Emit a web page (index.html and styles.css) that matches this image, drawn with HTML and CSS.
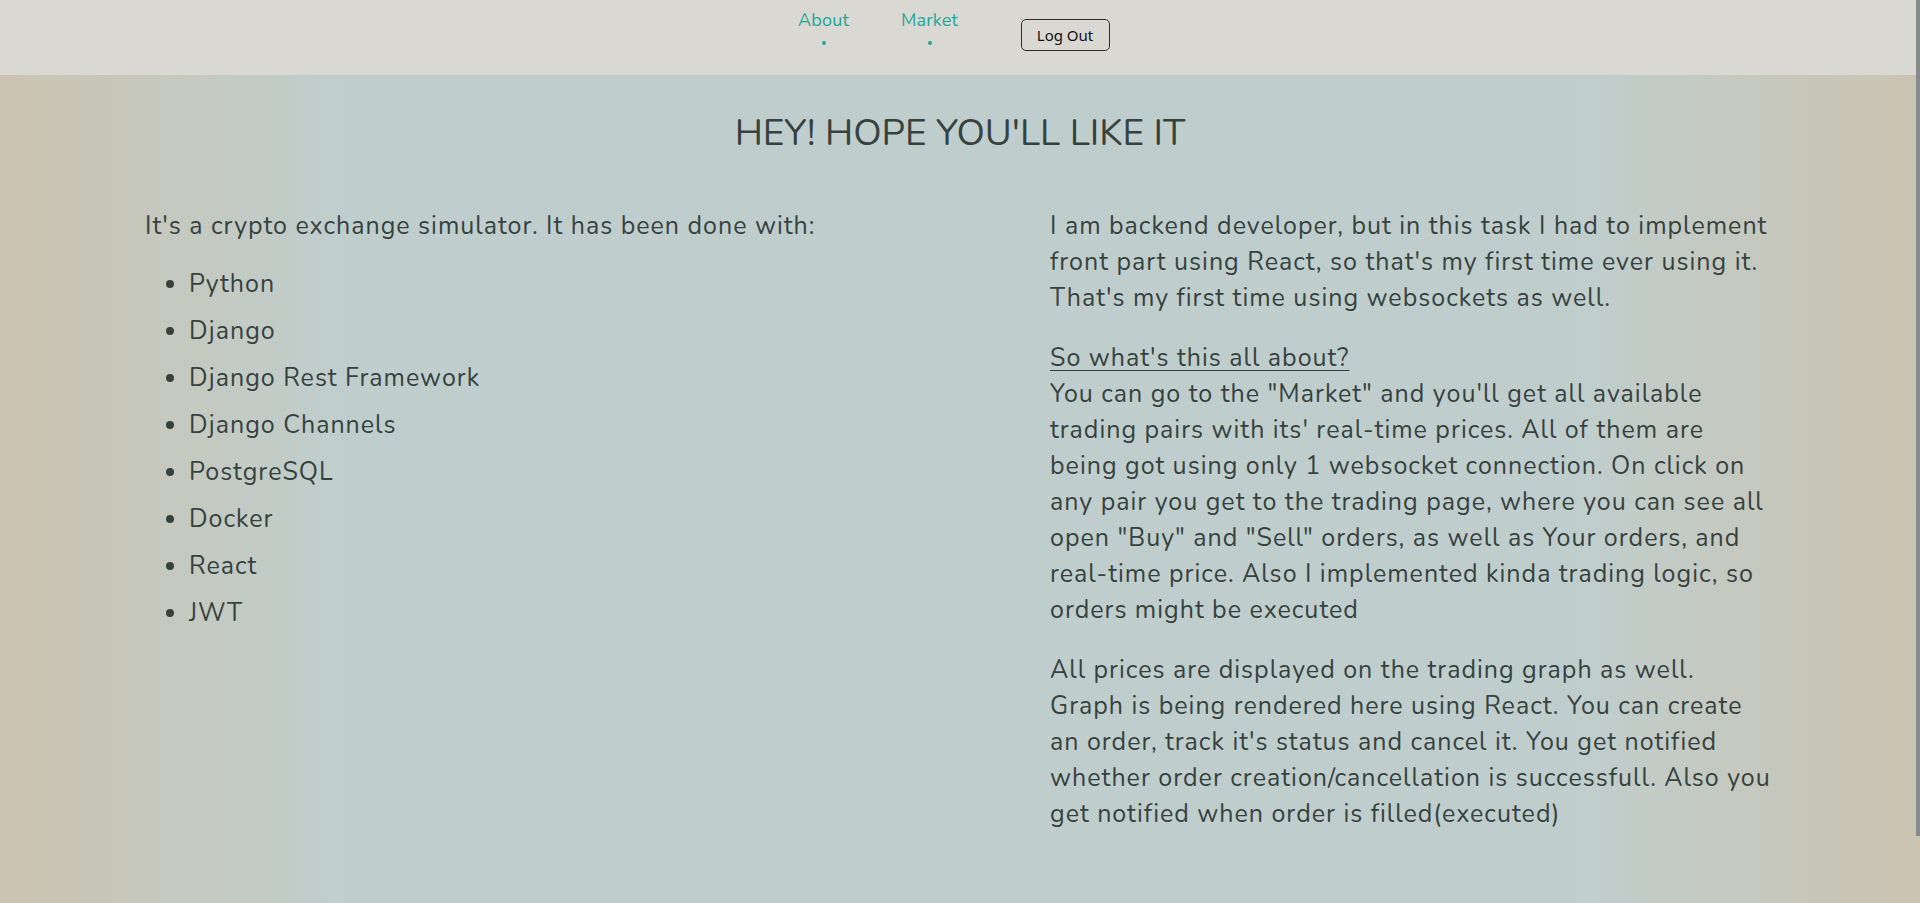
FILE: index.html
```html
<!DOCTYPE html>
<html lang="en">
<head>
<meta charset="utf-8">
<title>About</title>
<link rel="stylesheet" href="styles.css">
</head>
<body>
<header class="topbar">
  <nav class="nav">
    <a class="nav-link" href="#"><span class="nav-text">About</span><span class="nav-dot"></span></a>
    <a class="nav-link" href="#"><span class="nav-text">Market</span><span class="nav-dot"></span></a>
    <button class="logout" type="button">Log Out</button>
  </nav>
</header>
<main class="page">
  <h1 class="title">HEY! HOPE YOU'LL LIKE IT</h1>
  <div class="columns">
    <section class="col col-left">
      <p class="text">It's a crypto exchange simulator. It has been done with:</p>
      <ul class="stack">
        <li>Python</li>
        <li>Django</li>
        <li>Django Rest Framework</li>
        <li>Django Channels</li>
        <li>PostgreSQL</li>
        <li>Docker</li>
        <li>React</li>
        <li>JWT</li>
      </ul>
    </section>
    <section class="col col-right">
      <p class="text">I am backend developer, but in this task I had to implement front part using React, so that's my first time ever using it. That's my first time using websockets as well.</p>
      <p class="text"><u class="subhead">So what's this all about?</u><br>You can go to the "Market" and you'll get all available trading pairs with its' real-time prices. All of them are being got using only 1 websocket connection. On click on any pair you get to the trading page, where you can see all open "Buy" and "Sell" orders, as well as Your orders, and real-time price. Also I implemented kinda trading logic, so orders might be executed</p>
      <p class="text">All prices are displayed on the trading graph as well. Graph is being rendered here using React. You can create an order, track it's status and cancel it. You get notified whether order creation/cancellation is successfull. Also you get notified when order is filled(executed)</p>
    </section>
  </div>
</main>
<div class="scroll-thumb"></div>
</body>
</html>
```
FILE: styles.css
```css
html, body {
  margin: 0;
  padding: 0;
}
body {
  font-family: "Nunito", "Noto Sans", sans-serif;
  color: #37423f;
  min-height: 903px;
  background: linear-gradient(90deg, #cbc3b0 0%, #bfcecd 18%, #bfcecd 82%, #cbc3b0 100%);
}
.topbar {
  height: 75px;
  background: #d9d8d3;
  display: flex;
  justify-content: center;
}
.nav {
  display: flex;
  align-items: flex-start;
  padding-right: 27px;
}
.nav-link {
  width: 80px;
  display: flex;
  flex-direction: column;
  align-items: center;
  text-decoration: none;
  color: #26a69a;
  margin-right: 26px;
}
.nav-text {
  font-size: 18px;
  line-height: 24px;
  margin-top: 8px;
  letter-spacing: 0.2px;
}
.nav-dot {
  width: 4px;
  height: 4px;
  border-radius: 50%;
  background: #26a69a;
  margin-top: 9px;
}
.logout {
  margin-left: 25px;
  margin-top: 19px;
  width: 89px;
  height: 32px;
  border: 1px solid #2e2e2e;
  border-radius: 5px;
  background: transparent;
  font-family: "Noto Sans", sans-serif;
  font-size: 15px;
  color: #111;
  padding: 0;
}
.page {
  padding-bottom: 40px;
}
.title {
  margin: 0;
  padding-top: 32px;
  text-align: center;
  font-size: 37px;
  font-weight: 400;
  line-height: 52px;
  color: #37423f;
}
.columns {
  display: flex;
  padding: 0 147px 0 145px;
  margin-top: 49px;
}
.col-left {
  flex: 1;
}
.col-right {
  width: 723px;
}
.text {
  font-size: 25px;
  letter-spacing: 1px;
  line-height: 36px;
  margin: 0 0 24px;
}
.subhead {
  text-decoration-thickness: 1px;
  text-underline-offset: 4px;
}
.stack {
  margin: -2px 0 0;
  padding-left: 44px;
  font-size: 25px;
  letter-spacing: 1px;
  line-height: 36px;
}
.stack li {
  margin-bottom: 11px;
}
.scroll-thumb {
  position: fixed;
  top: 0;
  right: 0;
  width: 4px;
  height: 836px;
  background: #878b8b;
}
```
